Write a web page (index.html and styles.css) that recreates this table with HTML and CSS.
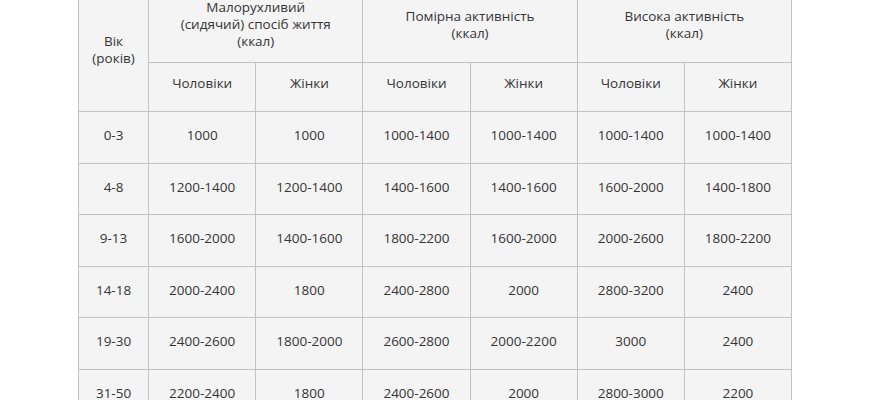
FILE: index.html
```html
<!DOCTYPE html>
<html lang="uk">
<head>
<meta charset="utf-8">
<title>Калорії</title>
<link rel="stylesheet" href="styles.css">
</head>
<body>
<table class="kcal">
  <colgroup>
    <col class="c-age">
    <col class="c-val"><col class="c-val"><col class="c-val">
    <col class="c-val"><col class="c-val"><col class="c-val">
  </colgroup>
  <thead>
    <tr class="h1">
      <th rowspan="2" class="age-h">Вік<br>(років)</th>
      <th colspan="2">Малорухливий<br>(сидячий) спосіб життя<br>(ккал)</th>
      <th colspan="2">Помірна активність<br>(ккал)</th>
      <th colspan="2">Висока активність<br>(ккал)</th>
    </tr>
    <tr class="h2">
      <th>Чоловіки</th><th>Жінки</th>
      <th>Чоловіки</th><th>Жінки</th>
      <th>Чоловіки</th><th>Жінки</th>
    </tr>
  </thead>
  <tbody>
    <tr><td>0-3</td><td>1000</td><td>1000</td><td>1000-1400</td><td>1000-1400</td><td>1000-1400</td><td>1000-1400</td></tr>
    <tr><td>4-8</td><td>1200-1400</td><td>1200-1400</td><td>1400-1600</td><td>1400-1600</td><td>1600-2000</td><td>1400-1800</td></tr>
    <tr><td>9-13</td><td>1600-2000</td><td>1400-1600</td><td>1800-2200</td><td>1600-2000</td><td>2000-2600</td><td>1800-2200</td></tr>
    <tr><td>14-18</td><td>2000-2400</td><td>1800</td><td>2400-2800</td><td>2000</td><td>2800-3200</td><td>2400</td></tr>
    <tr><td>19-30</td><td>2400-2600</td><td>1800-2000</td><td>2600-2800</td><td>2000-2200</td><td>3000</td><td>2400</td></tr>
    <tr><td>31-50</td><td>2200-2400</td><td>1800</td><td>2400-2600</td><td>2000</td><td>2800-3000</td><td>2200</td></tr>
  </tbody>
</table>
</body>
</html>
```

FILE: styles.css
```css
html, body {
  margin: 0;
  padding: 0;
  background: #ffffff;
}

body {
  font-family: "Open Sans", "Noto Sans", "DejaVu Sans", sans-serif;
  font-size: 13.5px;
  color: #353535;
  overflow: hidden;
}

.kcal {
  border-collapse: collapse;
  table-layout: fixed;
  width: 714px;
  margin: -8px 0 0 78px;
  background: #f4f4f4;
}

.c-age { width: 70px; }
.c-val { width: 107px; }

.kcal th,
.kcal td {
  border: 1px solid #c2c2c2;
  padding: 0 0 3px;
  text-align: center;
  vertical-align: middle;
  font-weight: 400;
  line-height: 17px;
}

.h1 { height: 70px; }
.h1 th { padding-bottom: 6px; }
.kcal .age-h { padding-bottom: 4px; }
.h2 { height: 49px; }
.h2 th { padding-bottom: 8px; }
.kcal tbody tr { height: 51.5px; }
```
